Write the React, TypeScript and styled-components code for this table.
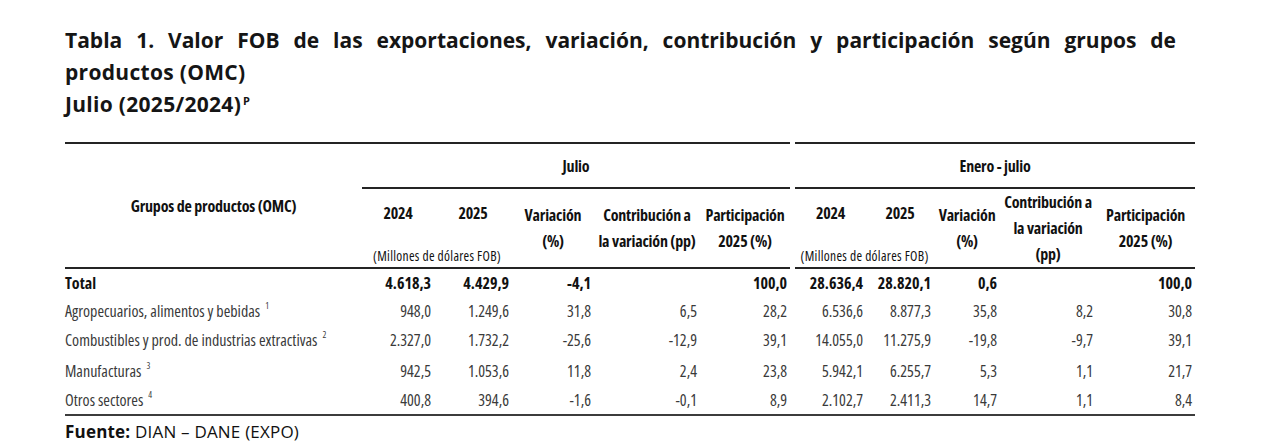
import React from "react";
import styled, { createGlobalStyle } from "styled-components";

const Global = createGlobalStyle`
  html, body { margin: 0; padding: 0; background: #fff; }
  body { width: 1280px; height: 442px; overflow: hidden; }
`;

const Page = styled.div`
  padding: 24px 0 0 65px;
  color: #111;
`;

const Title = styled.h1`
  margin: 0;
  width: 1111px;
  font-family: "Open Sans", "DejaVu Sans", sans-serif;
  font-weight: 700;
  font-size: 21px;
  line-height: 32px;
  color: #151515;
`;

const TitleLine = styled.span<{ $justify?: boolean }>`
  display: block;
  white-space: nowrap;
  letter-spacing: ${(p) => (p.$justify ? "0" : "0.3px")};
  text-align: ${(p) => (p.$justify ? "justify" : "left")};
  text-align-last: ${(p) => (p.$justify ? "justify" : "left")};
`;

const Sup = styled.sup`
  font-size: 11px;
  vertical-align: 7px;
  line-height: 0;
  margin-left: 2px;
`;

const Table = styled.table`
  margin-top: 22px;
  width: 1130px;
  table-layout: fixed;
  border-collapse: separate;
  border-spacing: 0;
  font-family: "Open Sans", "DejaVu Sans Condensed", sans-serif;
  font-stretch: 75%;
  font-size: 16px;
  color: #111;
`;

const HeadCell = styled.th<{ $top?: boolean; $bottom?: boolean }>`
  box-sizing: border-box;
  padding: 0;
  font-weight: 700;
  font-size: 16px;
  letter-spacing: -0.2px;
  text-align: center;
  vertical-align: middle;
  line-height: 26px;
  white-space: nowrap;
  border-top: ${(p) => (p.$top ? "2px solid #242424" : "0")};
  border-bottom: ${(p) => (p.$bottom ? "2px solid #242424" : "0")};
`;

const SmallHead = styled.th`
  box-sizing: border-box;
  padding: 0 0 4px 0;
  font-weight: 400;
  font-size: 13.5px;
  line-height: 14px;
  letter-spacing: 0.3px;
  text-align: center;
  vertical-align: bottom;
  border-bottom: 2px solid #242424;
  white-space: nowrap;
`;

const Spacer = styled.td`
  padding: 0;
`;

const RowA = styled.tr`
  height: 47px;
`;
const RowB = styled.tr`
  height: 48px;
`;
const RowC = styled.tr`
  height: 31px;
`;

const DataRow = styled.tr<{ $h: number }>`
  height: ${(p) => p.$h}px;
`;

const Label = styled.td<{ $bold?: boolean; $last?: boolean }>`
  box-sizing: border-box;
  padding: 0;
  text-align: left;
  white-space: nowrap;
  font-weight: ${(p) => (p.$bold ? 700 : 400)};
  color: ${(p) => (p.$bold ? "#111" : "#3a3a3a")};
  border-bottom: ${(p) => (p.$last ? "2px solid #3c3c3c" : "0")};
`;

const Num = styled.td<{ $bold?: boolean; $last?: boolean }>`
  box-sizing: border-box;
  padding: 0 3px 0 0;
  text-align: right;
  white-space: nowrap;
  font-weight: ${(p) => (p.$bold ? 700 : 400)};
  color: ${(p) => (p.$bold ? "#111" : "#3a3a3a")};
  border-bottom: ${(p) => (p.$last ? "2px solid #3c3c3c" : "0")};
`;

const Note = styled.sup`
  font-size: 9px;
  vertical-align: 8px;
  line-height: 0;
  margin-left: 5px;
`;

const Source = styled.p`
  margin: 6px 0 0 0;
  font-family: "Open Sans", "DejaVu Sans", sans-serif;
  font-size: 17px;
  line-height: 20px;
  letter-spacing: 0.2px;
  color: #111;
`;

const Strong = styled.span`
  font-weight: 700;
`;

type Row = { label: string; note?: string; bold?: boolean; h: number; v: string[] };

const rows: Row[] = [
  { label: "Total", bold: true, h: 28, v: ["4.618,3", "4.429,9", "-4,1", "", "100,0", "28.636,4", "28.820,1", "0,6", "", "100,0"] },
  { label: "Agropecuarios, alimentos y bebidas", note: "1", h: 27, v: ["948,0", "1.249,6", "31,8", "6,5", "28,2", "6.536,6", "8.877,3", "35,8", "8,2", "30,8"] },
  { label: "Combustibles y prod. de industrias extractivas", note: "2", h: 32, v: ["2.327,0", "1.732,2", "-25,6", "-12,9", "39,1", "14.055,0", "11.275,9", "-19,8", "-9,7", "39,1"] },
  { label: "Manufacturas", note: "3", h: 29, v: ["942,5", "1.053,6", "11,8", "2,4", "23,8", "5.942,1", "6.255,7", "5,3", "1,1", "21,7"] },
  { label: "Otros sectores", note: "4", h: 31, v: ["400,8", "394,6", "-1,6", "-0,1", "8,9", "2.102,7", "2.411,3", "14,7", "1,1", "8,4"] },
];

const widths = [297, 72, 78, 82, 106, 90, 5, 71, 68, 66, 96, 99];

export default function App() {
  return (
    <>
      <Global />
      <Page>
        <Title>
          <TitleLine $justify>
            Tabla 1. Valor FOB de las exportaciones, variación, contribución y participación según grupos de
          </TitleLine>
          <TitleLine>productos (OMC)</TitleLine>
          <TitleLine>
            Julio (2025/2024)<Sup>P</Sup>
          </TitleLine>
        </Title>
        <Table>
          <colgroup>
            {widths.map((w, i) => (
              <col key={i} style={{ width: w }} />
            ))}
          </colgroup>
          <thead>
            <RowA>
              <HeadCell rowSpan={3} $top $bottom>
                Grupos de productos (OMC)
              </HeadCell>
              <HeadCell colSpan={5} $top $bottom>
                Julio
              </HeadCell>
              <Spacer rowSpan={3} />
              <HeadCell colSpan={5} $top $bottom>
                Enero - julio
              </HeadCell>
            </RowA>
            <RowB>
              <HeadCell>2024</HeadCell>
              <HeadCell>2025</HeadCell>
              <HeadCell rowSpan={2} $bottom>
                Variación<br />(%)
              </HeadCell>
              <HeadCell rowSpan={2} $bottom>
                Contribución a<br />la variación (pp)
              </HeadCell>
              <HeadCell rowSpan={2} $bottom>
                Participación<br />2025 (%)
              </HeadCell>
              <HeadCell>2024</HeadCell>
              <HeadCell>2025</HeadCell>
              <HeadCell rowSpan={2} $bottom>
                Variación<br />(%)
              </HeadCell>
              <HeadCell rowSpan={2} $bottom>
                Contribución a<br />la variación<br />(pp)
              </HeadCell>
              <HeadCell rowSpan={2} $bottom>
                Participación<br />2025 (%)
              </HeadCell>
            </RowB>
            <RowC>
              <SmallHead colSpan={2}>(Millones de dólares FOB)</SmallHead>
              <SmallHead colSpan={2}>(Millones de dólares FOB)</SmallHead>
            </RowC>
          </thead>
          <tbody>
            {rows.map((r, ri) => {
              const last = ri === rows.length - 1;
              return (
                <DataRow key={r.label} $h={r.h}>
                  <Label $bold={r.bold} $last={last}>
                    {r.label}
                    {r.note && <Note>{r.note}</Note>}
                  </Label>
                  {r.v.slice(0, 5).map((x, i) => (
                    <Num key={i} $bold={r.bold} $last={last}>
                      {x}
                    </Num>
                  ))}
                  <Num $last={last} />
                  {r.v.slice(5).map((x, i) => (
                    <Num key={i + 5} $bold={r.bold} $last={last}>
                      {x}
                    </Num>
                  ))}
                </DataRow>
              );
            })}
          </tbody>
        </Table>
        <Source>
          <Strong>Fuente:</Strong> DIAN – DANE (EXPO)
        </Source>
      </Page>
    </>
  );
}
